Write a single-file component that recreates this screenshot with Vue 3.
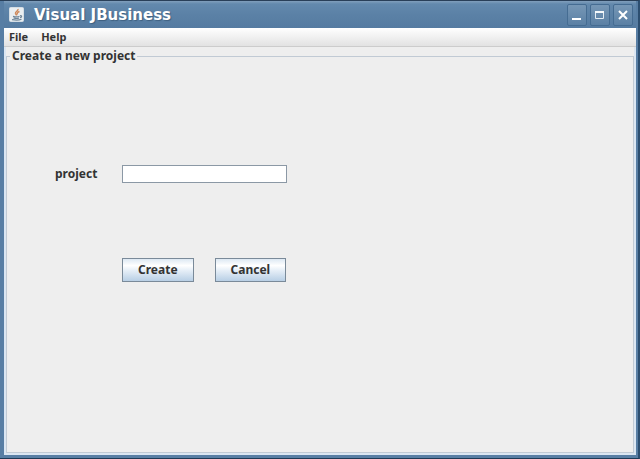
<script setup>
import { ref } from 'vue'

const project = ref('')
</script>

<template>
  <div class="window">
    <header class="titlebar">
      <svg class="logo" viewBox="0 0 16 16" aria-hidden="true">
        <rect x="0.5" y="0.5" width="14" height="14" rx="1" fill="#e9eef1" stroke="#d4dde4" />
        <path d="M9 2C9.500 4 6 4.500 6.500 6.500C6.800 7.300 7.500 7.600 7.500 8.500M10.500 4.500C8 5.500 8 6.500 8.500 7.500" fill="none" stroke="#d08a5c" stroke-width="1.500" />
        <path d="M4 9.300C6.500 10 9 10 10.500 9.300M4.500 11C7 11.700 9 11.500 10 11M3 12.700C7 13.400 10 13.300 12.500 12.300M11 8.800C13.300 8.200 13 10.200 11 10.700" fill="none" stroke="#6f8598" stroke-width="1.200" />
      </svg>
      <h1 class="title">Visual JBusiness</h1>
      <div class="controls">
        <button type="button" class="control" aria-label="Minimize">
          <svg viewBox="0 0 18 20"><path d="M4 14H13" stroke="#fff" stroke-width="2" /></svg>
        </button>
        <button type="button" class="control" aria-label="Maximize">
          <svg viewBox="0 0 18 20"><path d="M4.500 6V13.500H12.500V6" fill="none" stroke="#e4ecf3" /><path d="M4 7H13" stroke="#f4f8fb" stroke-width="2" /></svg>
        </button>
        <button type="button" class="control" aria-label="Close">
          <svg viewBox="0 0 18 20"><path d="M5 6L13 14M13 6L5 14" stroke="#fff" stroke-width="2" /></svg>
        </button>
      </div>
    </header>
    <nav class="menubar">
      <button type="button" class="menu">File</button>
      <button type="button" class="menu">Help</button>
    </nav>
    <form class="content" @submit.prevent>
      <fieldset class="group">
        <legend class="legend">Create a new project</legend>
        <div class="fields">
          <label class="label" for="project">project</label>
          <input id="project" v-model="project" class="input" type="text" />
          <div class="actions">
            <button type="submit" class="action">Create</button>
            <button type="button" class="action" @click="project = ''">Cancel</button>
          </div>
        </div>
      </fieldset>
    </form>
  </div>
</template>

<style>
body {
  background: #1d3a57;
}
</style>

<style scoped>
.window {
  box-sizing: border-box;
  min-height: 100vh;
  display: flex;
  flex-direction: column;
  padding: 0 2px 3px 4px;
  background: #587ea4;
  border-top: 1px solid #293f58;
  border-right: 2px solid #2c4e70;
  border-bottom: 1px solid #1d3a57;
  font-family: "Noto Sans", sans-serif;
  font-size: 11px;
  font-weight: 700;
  color: #333;
}

.titlebar {
  display: flex;
  align-items: center;
  height: 27px;
  padding: 0 3px 0 5px;
  background: linear-gradient(#819fbc 0, #6389ad 3px, #5b81a6 50%, #557ba1);
}

.logo {
  width: 16px;
  height: 16px;
}

.title {
  flex: 1;
  margin: 0 0 0 9px;
  font: 700 15px/20px "DejaVu Sans", sans-serif;
  color: #fff;
  text-shadow: 1px 1px 1px #3f6080;
}

.controls {
  display: flex;
  gap: 3px;
}

.control {
  width: 20px;
  height: 22px;
  padding: 0;
  border: 1px solid #456c92;
  border-radius: 2px;
  background: linear-gradient(#7697b6, #5b80a4);
}

.control svg {
  display: block;
  width: 100%;
}

.menubar {
  display: flex;
  gap: 13px;
  height: 18px;
  padding: 0 5px;
  background: linear-gradient(#fff, #e2e2e2);
  border-bottom: 1px solid #ccc;
}

.menu {
  padding: 0;
  border: 0;
  background: none;
  font: inherit;
  line-height: 16px;
  color: inherit;
}

.content {
  flex: 1;
  display: flex;
  padding: 1px 0 0;
  border: solid #dbe6f2;
  border-width: 0 2px 2px;
  background: #eee;
}

.group {
  flex: 1;
  min-width: 0;
  margin: 0;
  padding: 0;
  border: 1px solid #c1cad4;
}

.legend {
  margin-left: 3px;
  padding: 0 2px;
  font-size: 12px;
  line-height: 16px;
}

.fields {
  display: grid;
  grid-template-columns: 67px 165px;
  align-items: center;
  row-gap: 75px;
  padding: 101px 0 0 48px;
}

.label {
  font-size: 12px;
  line-height: 18px;
}

.input {
  box-sizing: border-box;
  width: 100%;
  height: 18px;
  padding: 0 2px;
  border: 1px solid #8b98a5;
  background: #fff;
  font: inherit;
}

.actions {
  grid-column: 2;
  display: flex;
  gap: 21px;
}

.action {
  flex: none;
  height: 24px;
  padding: 0 15px;
  border: 1px solid #7a8a99;
  background: linear-gradient(#dde8f3, #fff 30%, #e8f0f8 50%, #b8cfe5);
  font: inherit;
  font-size: 12px;
  line-height: 20px;
  color: inherit;
}
</style>
